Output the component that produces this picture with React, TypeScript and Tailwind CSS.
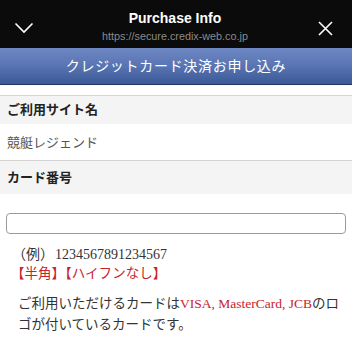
const jp = { fontFamily: '"Liberation Serif", "Noto Sans CJK JP", serif' };

function ChevronDown() {
  return (
    <svg width="20" height="12" viewBox="0 0 20 12" fill="none" stroke="white" strokeWidth="1.6">
      <path d="M1.5 1.5 L10 10 L18.5 1.5" />
    </svg>
  );
}

function Close() {
  return (
    <svg width="15" height="15" viewBox="0 0 15 15" fill="none" stroke="white" strokeWidth="1.6">
      <path d="M1 1 L14 14 M14 1 L1 14" />
    </svg>
  );
}

export default function App() {
  return (
    <div className="w-[352px] h-[340px] overflow-hidden bg-white" style={jp}>
      {/* browser sheet header */}
      <div className="h-[48px] bg-[#0b0b0b] flex items-center justify-between pl-[12px] pr-[14px]">
        <div className="w-[24px] flex justify-center pt-[8px]">
          <ChevronDown />
        </div>
        <div className="flex flex-col items-center" style={{ fontFamily: '"Liberation Sans", Arial, sans-serif' }}>
          <div className="text-white text-[14px] font-bold leading-[18px] mt-[3px]">Purchase Info</div>
          <div className="text-[#8a8a8a] text-[10.8px] leading-[14px] mt-[2px]">https://secure.credix-web.co.jp</div>
        </div>
        <div className="w-[24px] flex justify-center pt-[8px]">
          <Close />
        </div>
      </div>

      {/* title band */}
      <div className="h-[37px] bg-gradient-to-b from-[#6e88c3] via-[#5874b3] to-[#3b5897] border-b border-[#24365e] flex items-center justify-center">
        <span className="text-white text-[14px] tracking-[0.7px]">クレジットカード決済お申し込み</span>
      </div>

      <div className="h-[10px]" />

      <div className="border-t border-[#d4d4d4] bg-[#f4f4f4] h-[29px] flex items-center px-[7px]">
        <span className="text-[13px] font-bold text-[#222]">ご利用サイト名</span>
      </div>
      <div className="h-[36px] flex items-center px-[7px] pt-[2px]">
        <span className="text-[13px] text-[#555]">競艇レジェンド</span>
      </div>
      <div className="border-t border-[#d4d4d4] bg-[#f4f4f4] h-[34px] flex items-center px-[7px]">
        <span className="text-[13px] font-bold text-[#222]">カード番号</span>
      </div>

      <div className="px-[6px] pt-[19px]">
        <div className="h-[21px] rounded-[4px] border border-[#9a9a9a] bg-white" />
      </div>

      <div className="px-[14px] pt-[11px] leading-[19px]">
        <div className="text-[#333] text-[14px] -ml-[2px]">
          （例）<span className="pl-[1px]">1234567891234567</span>
        </div>
        <div className="text-[#c8232c] text-[13.5px] -ml-[3px]">【半角】【ハイフンなし】</div>
      </div>

      <div className="pl-[18px] pr-[12px] pt-[10px] text-[13.5px] leading-[21px] text-[#333]">
        ご利用いただけるカードは<span className="text-[#c8232c]">VISA, MasterCard, JCB</span>のロゴが付いているカードです。
      </div>
    </div>
  );
}
